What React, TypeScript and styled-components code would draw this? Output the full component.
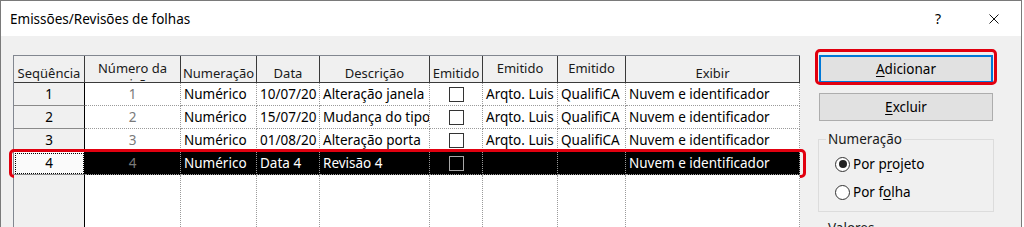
import React from 'react'
import styled, { createGlobalStyle, css } from 'styled-components'

const GlobalStyle = createGlobalStyle`
  html, body {
    margin: 0;
    padding: 0;
    background: #fff;
  }
  body {
    font-family: "Noto Sans", "Open Sans", sans-serif;
    font-size: 13.5px;
    color: #000;
  }
`

const Window = styled.div`
  width: 1022px;
  height: 227px;
  box-sizing: border-box;
  border: 1px solid #7a7a7a;
  border-bottom: none;
  display: flex;
  flex-direction: column;
  overflow: hidden;
`

const TitleBar = styled.div`
  height: 35px;
  flex: none;
  background: #fff;
  display: flex;
  align-items: center;
  padding-left: 9px;
`

const Title = styled.div`
  flex: 1;
  line-height: 16px;
`

const HelpButton = styled.div`
  width: 16px;
  text-align: center;
  font-size: 14px;
  margin-right: 43px;
`

const CloseButton = styled.div`
  width: 10px;
  height: 10px;
  margin-right: 22px;
  display: flex;
`

const Body = styled.div`
  flex: 1;
  background: #f0f0f0;
  display: flex;
  align-items: flex-start;
  gap: 19px;
  padding: 19px 0 0 12px;
  overflow: hidden;
`

const Grid = styled.div`
  width: 787px;
  flex: none;
  box-sizing: border-box;
  border-left: 1px solid #828790;
  border-top: 1px solid #828790;
  background: #fff;
`

const Row = styled.div<{ $height?: number; $highlight?: boolean }>`
  display: flex;
  height: ${p => p.$height ?? 23}px;
  position: relative;
  ${p => p.$highlight && css`
    &::after {
      content: '';
      position: absolute;
      top: -3px;
      bottom: -3px;
      left: -5px;
      right: -6px;
      border: 3px solid #e1000f;
      border-radius: 5px;
      pointer-events: none;
    }
  `}
`

const HeaderCell = styled.div<{ $w: number; $wrap?: boolean }>`
  width: ${p => p.$w}px;
  flex: none;
  box-sizing: border-box;
  background: #f0f0f0;
  border-right: 1px solid #3a3a3a;
  border-bottom: 1px solid #3a3a3a;
  overflow: hidden;
  text-align: center;
  font-size: 13px;
  line-height: 16px;
  padding-top: ${p => (p.$wrap ? 4 : 9)}px;
  white-space: ${p => (p.$wrap ? 'normal' : 'nowrap')};
  color: #1a1a1a;
`

const SeqCell = styled.div<{ $w: number; $focus?: boolean; $empty?: boolean }>`
  width: ${p => p.$w}px;
  flex: none;
  box-sizing: border-box;
  background: ${p => (p.$focus ? '#fafafa' : '#f0f0f0')};
  border-right: 1px solid #000;
  border-bottom: ${p => (p.$empty ? 'none' : '1px solid #8a8a8a')};
  text-align: center;
  line-height: 22px;
  ${p => p.$focus && css`
    outline: 1px dotted #000;
    outline-offset: -2px;
  `}
`

const DataCell = styled.div<{ $w: number; $align?: 'left' | 'center'; $muted?: boolean; $selected?: boolean; $empty?: boolean }>`
  width: ${p => p.$w}px;
  flex: none;
  box-sizing: border-box;
  display: flex;
  align-items: center;
  justify-content: ${p => (p.$align === 'center' ? 'center' : 'flex-start')};
  padding-left: ${p => (p.$align === 'center' ? 0 : 3)}px;
  border-right: 1px dotted #9a9a9a;
  border-bottom: ${p => (p.$empty ? 'none' : '1px dotted #9a9a9a')};
  background: ${p => (p.$selected ? '#000' : '#fff')};
  color: ${p => (p.$muted ? '#7a7a7a' : p.$selected ? '#fff' : '#000')};
  white-space: nowrap;
  overflow: hidden;
  line-height: 22px;
`

const CheckBox = styled.span<{ $dark?: boolean }>`
  display: block;
  width: 13px;
  height: 13px;
  border: 1px solid ${p => (p.$dark ? '#a8a8a8' : '#333')};
  background: ${p => (p.$dark ? '#000' : '#fff')};
`

const Side = styled.div`
  width: 174px;
  flex: none;
  display: flex;
  flex-direction: column;
`

const Button = styled.div<{ $default?: boolean; $highlight?: boolean }>`
  height: 28px;
  box-sizing: border-box;
  position: relative;
  display: flex;
  align-items: center;
  justify-content: center;
  background: #e1e1e1;
  border: 1px solid ${p => (p.$default ? '#0078d7' : '#adadad')};
  ${p => p.$default && css`
    box-shadow: inset 0 0 0 1px #0078d7;
  `}
  & + & {
    margin-top: 10px;
  }
  ${p => p.$highlight && css`
    &::after {
      content: '';
      position: absolute;
      top: -7px;
      bottom: -3px;
      left: -5px;
      right: -5px;
      border: 3px solid #e1000f;
      border-radius: 5px;
      pointer-events: none;
    }
  `}
`

const Key = styled.span`
  text-decoration: underline;
  text-underline-offset: 2px;
`

const GroupBox = styled.fieldset<{ $gap: number }>`
  margin: ${p => p.$gap}px 0 0 -1px;
  width: 176px;
  box-sizing: border-box;
  border: 1px solid #dcdcdc;
  padding: 3px 0 5px 7px;
  min-width: 0;
`

const Legend = styled.legend`
  padding: 0 2px;
  line-height: 16px;
  color: #1a1a1a;
`

const RadioRow = styled.label`
  display: flex;
  align-items: center;
  gap: 3px;
  height: 28px;
  padding-left: 9px;
`

const Radio = styled.span<{ $checked?: boolean }>`
  width: 13px;
  height: 13px;
  border: 1px solid #333;
  border-radius: 50%;
  background: #fff;
  display: flex;
  align-items: center;
  justify-content: center;
  &::after {
    content: '';
    width: 8px;
    height: 8px;
    border-radius: 50%;
    background: #222;
    display: ${p => (p.$checked ? 'block' : 'none')};
  }
`

const widths = [71, 96, 76, 63, 110, 53, 75, 68, 174]

type Revision = {
  seq: string
  number: string
  numbering: string
  date: string
  description: string
  by: string
  to: string
  show: string
}

const rows: Revision[] = [
  { seq: '1', number: '1', numbering: 'Numérico', date: '10/07/20', description: 'Alteração janela', by: 'Arqto. Luis', to: 'QualifiCA', show: 'Nuvem e identificador' },
  { seq: '2', number: '2', numbering: 'Numérico', date: '15/07/20', description: 'Mudança do tipo de piso', by: 'Arqto. Luis', to: 'QualifiCA', show: 'Nuvem e identificador' },
  { seq: '3', number: '3', numbering: 'Numérico', date: '01/08/20', description: 'Alteração porta', by: 'Arqto. Luis', to: 'QualifiCA', show: 'Nuvem e identificador' },
  { seq: '4', number: '4', numbering: 'Numérico', date: 'Data 4', description: 'Revisão 4', by: '', to: '', show: 'Nuvem e identificador' },
]

const SELECTED = 3

export default function App() {
  return (
    <>
      <GlobalStyle />
      <Window>
        <TitleBar>
          <Title>Emissões/Revisões de folhas</Title>
          <HelpButton>?</HelpButton>
          <CloseButton>
            <svg width="10" height="10" viewBox="0 0 10 10">
              <path d="M0.5 0.5 L9.5 9.5 M9.5 0.5 L0.5 9.5" stroke="#111" strokeWidth="1" fill="none" />
            </svg>
          </CloseButton>
        </TitleBar>
        <Body>
          <Grid>
            <Row $height={27}>
              <HeaderCell $w={widths[0]}>Seqüência</HeaderCell>
              <HeaderCell $w={widths[1]} $wrap>Número da revisão</HeaderCell>
              <HeaderCell $w={widths[2]}>Numeração</HeaderCell>
              <HeaderCell $w={widths[3]}>Data</HeaderCell>
              <HeaderCell $w={widths[4]}>Descrição</HeaderCell>
              <HeaderCell $w={widths[5]}>Emitido</HeaderCell>
              <HeaderCell $w={widths[6]} $wrap>Emitido<br />por</HeaderCell>
              <HeaderCell $w={widths[7]} $wrap>Emitido<br />para</HeaderCell>
              <HeaderCell $w={widths[8]}>Exibir</HeaderCell>
            </Row>
            {rows.map((r, i) => {
              const sel = i === SELECTED
              return (
                <Row key={r.seq} $highlight={sel}>
                  <SeqCell $w={widths[0]} $focus={sel}>{r.seq}</SeqCell>
                  <DataCell $w={widths[1]} $align="center" $muted $selected={sel}>{r.number}</DataCell>
                  <DataCell $w={widths[2]} $selected={sel}>{r.numbering}</DataCell>
                  <DataCell $w={widths[3]} $selected={sel}>{r.date}</DataCell>
                  <DataCell $w={widths[4]} $selected={sel}>{r.description}</DataCell>
                  <DataCell $w={widths[5]} $align="center" $selected={sel}>
                    <CheckBox $dark={sel} />
                  </DataCell>
                  <DataCell $w={widths[6]} $selected={sel}>{r.by}</DataCell>
                  <DataCell $w={widths[7]} $selected={sel}>{r.to}</DataCell>
                  <DataCell $w={widths[8]} $selected={sel}>{r.show}</DataCell>
                </Row>
              )
            })}
            <Row $height={80}>
              <SeqCell $w={widths[0]} $empty />
              {widths.slice(1).map((w, i) => (
                <DataCell key={i} $w={w} $empty />
              ))}
            </Row>
          </Grid>
          <Side>
            <Button $default $highlight>
              <span><Key>A</Key>dicionar</span>
            </Button>
            <Button>
              <span><Key>E</Key>xcluir</span>
            </Button>
            <GroupBox $gap={10}>
              <Legend>Numeração</Legend>
              <RadioRow>
                <Radio $checked />
                <span>Por p<Key>r</Key>ojeto</span>
              </RadioRow>
              <RadioRow>
                <Radio />
                <span>Por f<Key>o</Key>lha</span>
              </RadioRow>
            </GroupBox>
            <GroupBox $gap={8}>
              <Legend>Valores</Legend>
              <RadioRow>
                <Radio />
              </RadioRow>
            </GroupBox>
          </Side>
        </Body>
      </Window>
    </>
  )
}
